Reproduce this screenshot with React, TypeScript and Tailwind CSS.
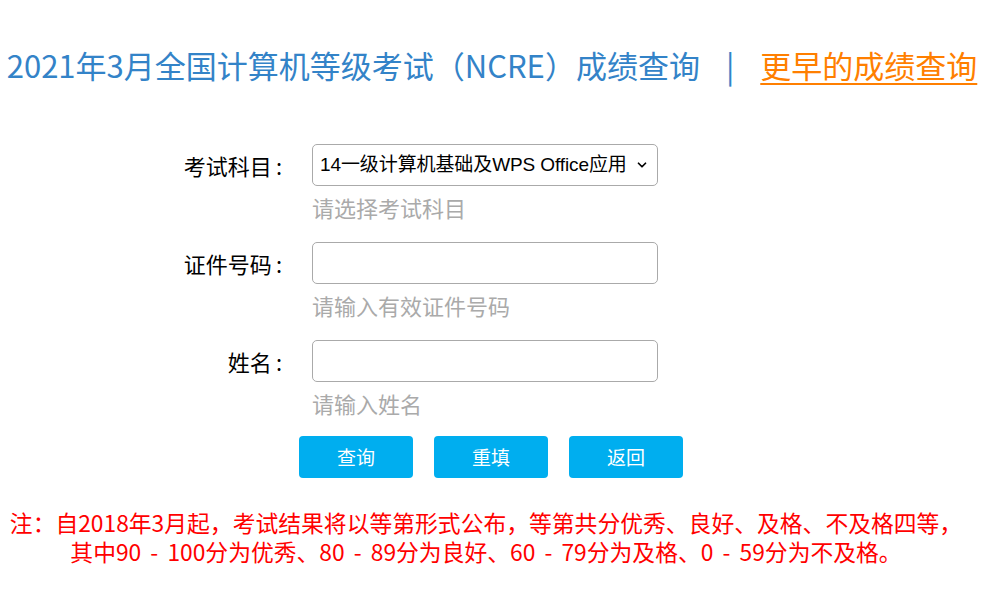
import { ChevronDown } from "lucide-react";

const cjk = "font-['Noto_Sans_CJK_SC',sans-serif]";

const rows = [
  { label: "考试科目", hint: "请选择考试科目", select: true },
  { label: "证件号码", hint: "请输入有效证件号码" },
  { label: "姓名", hint: "请输入姓名" },
];

export default function App() {
  return (
    <div className={`w-[1006px] h-[590px] bg-white overflow-hidden ${cjk}`}>
      <div className="w-[984px]">
        <div className="pt-[42px] flex justify-center items-center whitespace-nowrap text-[31px] leading-[46px]">
          <span className="text-[#3383c8]">2021年3月全国计算机等级考试（NCRE）成绩查询</span>
          <span className="text-[#3383c8] mx-[26px]">|</span>
          <a className="text-[#ff7f00] underline underline-offset-[5px] decoration-[2px]">更早的成绩查询</a>
        </div>
      </div>

      <div className="mt-[56px] flex flex-col gap-[14px]">
        {rows.map((r) => (
          <div key={r.label} className="flex items-start">
            <div className="w-[282px] text-right text-[22px] leading-[42px] text-black">
              {r.label}
              <span className="ml-[4px]">:</span>
            </div>
            <div className="ml-[30px] w-[346px]">
              {r.select ? (
                <div className="h-[42px] border border-[#aaaaaa] rounded-[5px] flex items-center justify-between pl-[7px] pr-[8px] text-[19px] text-black font-['Liberation_Sans','Noto_Sans_CJK_SC',sans-serif]">
                  <span className="whitespace-nowrap tracking-[-0.1px]">14一级计算机基础及WPS Office应用</span>
                  <ChevronDown size={14} strokeWidth={3} />
                </div>
              ) : (
                <input className="block w-full h-[42px] border border-[#aaaaaa] rounded-[5px] outline-none px-2" />
              )}
              <div className="text-[22px] leading-[42px] text-[#aaaaaa]">{r.hint}</div>
            </div>
          </div>
        ))}
      </div>

      <div className="w-[982px] mt-[12px] flex justify-center gap-[21px]">
        {["查询", "重填", "返回"].map((b) => (
          <button key={b} className="w-[114px] h-[42px] rounded-[4px] bg-[#00aeef] text-white text-[19px]">
            {b}
          </button>
        ))}
      </div>

      <div className="w-[972px] mt-[30px] text-center text-[22.8px] leading-[29px] text-[#ff0000] whitespace-nowrap">
        <p>注：自2018年3月起，考试结果将以等第形式公布，等第共分优秀、良好、及格、不及格四等，</p>
        <p className="[word-spacing:4px]">其中90 - 100分为优秀、80 - 89分为良好、60 - 79分为及格、0 - 59分为不及格。</p>
      </div>
    </div>
  );
}
